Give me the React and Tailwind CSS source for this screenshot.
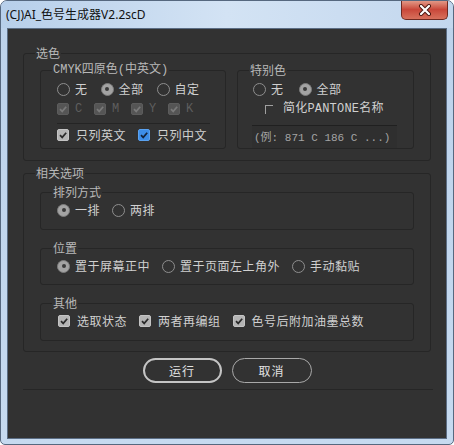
import React from "react";

const cjk = "font-['Noto_Sans_CJK_SC',sans-serif]";
const mono = "font-['Liberation_Mono','Noto_Sans_CJK_SC',monospace]";

function Check({ variant = "on" }) {
  const box =
    variant === "blue"
      ? "bg-[#3d8ee8] border-[#5aa2f0]"
      : variant === "off"
      ? "bg-[#555555] border-[#5c5c5c]"
      : "bg-[#b4b4b4] border-[#c4c4c4]";
  const stroke = variant === "blue" ? "#13233a" : variant === "off" ? "#7a7a7a" : "#2a2a2a";
  return (
    <span className={`w-[12px] h-[12px] rounded-[2px] border flex items-center justify-center shrink-0 ${box}`}>
      <svg width="10" height="10" viewBox="0 0 10 10">
        <path d="M2 5.2 L4.2 7.4 L8.2 2.8" fill="none" stroke={stroke} strokeWidth="1.7" />
      </svg>
    </span>
  );
}

function CheckItem({ label, variant }) {
  return (
    <span className="flex items-center gap-[7px]">
      <Check variant={variant} />
      <span className="tracking-[0.5px]">{label}</span>
    </span>
  );
}

function Radio({ checked, label }) {
  return (
    <span className="flex items-center gap-[5px]">
      {checked ? (
        <span className="w-[13px] h-[13px] rounded-full border-[1.5px] border-[#7d7d7d] bg-[#a3a3a3] flex items-center justify-center">
          <span className="w-[4px] h-[4px] rounded-full bg-[#3a3a3a]" />
        </span>
      ) : (
        <span className="w-[13px] h-[13px] rounded-full border-[1.5px] border-[#8e8e8e]" />
      )}
      <span className="tracking-[0.5px]">{label}</span>
    </span>
  );
}

function Group({ title, className = "", legendClass = "", children }) {
  return (
    <fieldset className={`border border-[#262626] rounded-[3px] ${className}`}>
      <legend className={`ml-[11px] px-[1px] text-[12px] leading-[14px] text-[#b8b8b8] ${legendClass}`}>{title}</legend>
      {children}
    </fieldset>
  );
}

export default function App() {
  return (
    <div className={`w-[454px] h-[445px] flex flex-col rounded-t-[7px] rounded-b-[5px] border border-[#56687f] bg-linear-to-b from-[#bcd2eb] to-[#c6daf0] overflow-hidden ${cjk}`}>
      {/* barra de título */}
      <div className="h-[27px] shrink-0 flex items-center justify-between pl-[5px] bg-linear-to-r from-[#b7cfea] via-[#d3e3f4] to-[#c3d7ee]">
        <span className="text-[12px] leading-[16px] text-[#111] font-['Noto_Sans','Noto_Sans_CJK_SC',sans-serif]">(CJ)AI_色号生成器V2.2scD</span>
        <div className="self-start -mt-px mr-[5px] w-[47px] h-[20px] rounded-b-[5px] border border-t-0 border-[#6e2a22] bg-linear-to-b from-[#e3a08f] via-[#c9473a] to-[#d7705c] flex items-center justify-center">
          <svg width="16" height="12" viewBox="0 0 16 12">
            <path d="M4 2 L12 10 M12 2 L4 10" stroke="#4a1710" strokeWidth="4" strokeLinecap="round" />
            <path d="M4 2 L12 10 M12 2 L4 10" stroke="#ffffff" strokeWidth="2.2" strokeLinecap="round" />
          </svg>
        </div>
      </div>

      {/* área de cliente */}
      <div className="mx-[6px] h-[411px] shrink-0 border border-[#5b6d84] bg-[#323232] pt-[17px] px-[15px] text-[12px] leading-[16px] text-[#d0d0d0]">
        <Group title="选色">
          <div className="flex gap-[11px] px-[16px] pt-[3px] pb-[11px]">
            <Group title="CMYK四原色(中英文)" className="w-[186px]" legendClass={`${mono} text-[11px]`}>
              <div className="pl-[16px]">
                <div className="mt-[4px] h-[16px] flex items-center gap-[13px]">
                  <Radio label="无" />
                  <Radio checked label="全部" />
                  <Radio label="自定" />
                </div>
                <div className={`mt-[4px] h-[16px] flex items-center ${mono} text-[12px] text-[#5e5e5e]`}>
                  {["C", "M", "Y", "K"].map((l) => (
                    <span key={l} className="w-[37px] flex items-center gap-[6px]">
                      <Check variant="off" />
                      <span>{l}</span>
                    </span>
                  ))}
                </div>
                <div className="mt-[6px] h-px w-[153px] bg-[#242424]" />
                <div className="mt-[3px] h-[16px] flex items-center gap-[12px]">
                  <CheckItem label="只列英文" />
                  <CheckItem variant="blue" label="只列中文" />
                </div>
              </div>
            </Group>
            <Group title="特别色" className="w-[177px]">
              <div className="mt-[4px] h-[16px] pl-[15px] flex items-center gap-[15px]">
                <Radio label="无" />
                <Radio checked label="全部" />
              </div>
              <div className="mt-[4px] h-[16px] pl-[27px] flex items-center gap-[10px]">
                <span className="w-[8px] h-[9px] border-l border-t border-[#a0a0a0]" />
                <span className={`${mono} text-[12px] tracking-[0.2px]`}>简化PANTONE名称</span>
              </div>
              <div className={`mt-[8px] ml-[14px] w-[145px] h-[23px] border-t border-[#202020] bg-[#2f2f2f] pl-[2px] pt-[4px] ${mono} text-[11px] leading-[16px] text-[#a4a4a4]`}>
                (例: 871 C 186 C ...)
              </div>
            </Group>
          </div>
        </Group>

        <Group title="相关选项" className="mt-[5px]">
          <div className="px-[16px] pt-[5px] pb-[10px] flex flex-col">
            <Group title="排列方式">
              <div className="mt-[3px] mb-[11px] h-[16px] pl-[16px] flex items-center gap-[12px]">
                <Radio checked label="一排" />
                <Radio label="两排" />
              </div>
            </Group>
            <Group title="位置" className="mt-[11px]">
              <div className="mt-[3px] mb-[10px] h-[16px] pl-[16px] flex items-center gap-[12px]">
                <Radio checked label="置于屏幕正中" />
                <Radio label="置于页面左上角外" />
                <Radio label="手动黏贴" />
              </div>
            </Group>
            <Group title="其他" className="mt-[11px]">
              <div className="mt-[3px] mb-[11px] h-[16px] pl-[17px] flex items-center gap-[12px]">
                <CheckItem label="选取状态" />
                <CheckItem label="两者再编组" />
                <CheckItem label="色号后附加油墨总数" />
              </div>
            </Group>
          </div>
        </Group>

        <div className="mt-[6px] flex justify-center gap-[10px]">
          <button className="w-[79px] h-[25px] rounded-full border-2 border-[#c4c4c4] text-[#e2e2e2] text-[12px] tracking-[1px]">运行</button>
          <button className="w-[80px] h-[25px] rounded-full border border-[#a9a9a9] text-[#e2e2e2] text-[12px] tracking-[1px]">取消</button>
        </div>
        <div className="mt-[6px] h-px w-[410px] bg-[#262626]" />
      </div>
    </div>
  );
}
